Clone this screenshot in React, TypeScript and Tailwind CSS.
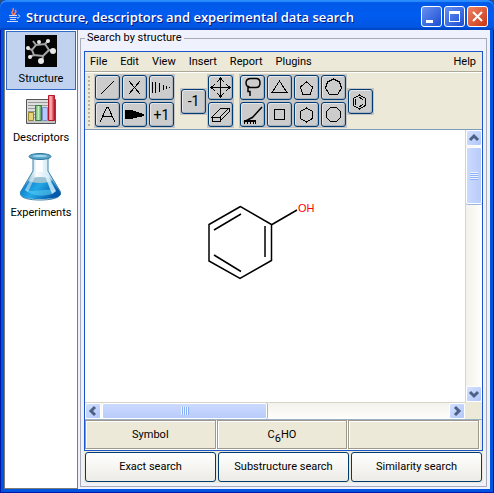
import React, { ReactNode } from "react";

type SvgProps = { children: ReactNode };

function ToolIcon({ children }: SvgProps) {
  return (
    <svg width="21" height="21" viewBox="0 0 21 21" fill="none" stroke="#000" strokeWidth="1" shapeRendering="crispEdges" aria-hidden="true">
      {children}
    </svg>
  );
}

function ToolButton({ label, children }: { label: string; children: ReactNode }) {
  return (
    <button
      type="button"
      aria-label={label}
      className="flex h-[25px] w-[25px] items-center justify-center rounded-[3px] border border-[#003c74] bg-[#cccccc] text-sm leading-4 shadow-[inset_1px_1px_0_#e4e6ea,inset_-1px_-1px_0_#a9b3bd]"
    >
      {children}
    </button>
  );
}

const BondIcon = () => <ToolIcon><path d="M4 17 17 4" /></ToolIcon>;
const CrossIcon = () => <ToolIcon><path d="M5 4 16 17M16 4 5 17" /></ToolIcon>;
const HashIcon = () => (
  <ToolIcon>
    <path d="M1.5 5v11M4.5 5v11M8.5 6v9M12.5 8v5M15.5 9v3M18.5 10v1" />
  </ToolIcon>
);
const LetterIcon = () => <ToolIcon><path d="M3 18 10 3h1l7 15M6 12h10" /></ToolIcon>;
const WedgeIcon = () => <ToolIcon><path d="M1 6h6l13 4v2L7 15H1z" fill="#000" stroke="none" /></ToolIcon>;
const MoveIcon = () => (
  <ToolIcon>
    <path d="M10.5 1v19M1 10.5h19M7 5l3.5-4L14 5M7 16l3.5 4 3.5-4M5 7l-4 3.5L5 14M16 7l4 3.5-4 3.5" />
  </ToolIcon>
);
const EraserIcon = () => <ToolIcon><path d="M2 13 11 4h8l-9 9zM2 13v4h8v-4M10 17l9-9V4" /></ToolIcon>;
const LassoIcon = () => (
  <ToolIcon>
    <path d="M8 10.500c-2 0-4-2-4-4.500 0-3 2-4.500 5-4.500h5c3 0 4 2 4 4.500s-1 4.500-4 4.500zM8 10.500 6 9M8 10.500H6v4h2v4.500" strokeWidth="1.500" shapeRendering="auto" />
  </ToolIcon>
);
const BroomIcon = () => (
  <ToolIcon>
    <path d="M20 3 10 14M2 18l9-5" strokeWidth="1.500" shapeRendering="auto" />
    <path d="M2 17h12v1H2zM2 18h1v2H2zM5 18h1v2H5zM8 18h1v2H8zM11 18h1v2h-1zM13 18h1v2h-1z" fill="#000" stroke="none" />
    <path d="M2 16.500h12" />
  </ToolIcon>
);
const TriangleIcon = () => <ToolIcon><path d="M10.500 4 18 15.500H3z" /></ToolIcon>;
const PentagonIcon = () => <ToolIcon><path d="m10.500 5 6 5-2 7h-8l-2-7z" /></ToolIcon>;
const HeptagonIcon = () => <ToolIcon><path d="m10.500 2 6 3 2 6-4 6.500h-8L2.500 11l2-6z" /></ToolIcon>;
const SquareIcon = () => <ToolIcon><path d="M5.500 5.500h10v10h-10z" /></ToolIcon>;
const HexagonIcon = () => <ToolIcon><path d="m10.500 4 6 3.500v7l-6 3.500-6-3.500v-7z" /></ToolIcon>;
const OctagonIcon = () => <ToolIcon><path d="M7.500 3.500h6l4 4v6l-4 4h-6l-4-4v-6z" /></ToolIcon>;
const BenzeneIcon = () => (
  <ToolIcon>
    <path d="m9.500 4 6 3.500v7l-6 3.500-6-3.500v-7zM5.500 8v6M9 6l4 2.500M9 16l4-2.500" />
  </ToolIcon>
);

function JavaIcon() {
  return (
    <svg width="16" height="16" viewBox="0 0 16 16" fill="none" aria-hidden="true">
      <path d="M8 8C3 5 9 4 7 1M9 8c-2-3 3-2 0-5" stroke="#ff805c" strokeWidth="1.500" />
      <path d="M3 8.500h8M3.500 10.500h7M4 12.500h6M1 14.500h11M12 8c3 0 2 3-1 3" stroke="#d1d9ff" />
    </svg>
  );
}

function MoleculeIcon() {
  return (
    <svg width="32" height="32" viewBox="0 0 32 32" aria-hidden="true">
      <path fill="#050505" d="M0 0h32v32H0z" />
      <path d="m11 10 9-1 4 6-6 6-9-1-2-5zM11 10 8 6M20 9l3-3M24 15l5 1M18 21l-1 6M9 20l-5 2M7 15l-5-2" fill="none" stroke="#a5a5a5" strokeWidth="2" />
      <g fill="#e8e8e8">
        <circle cx="14" cy="7" r="2" /><circle cx="23" cy="6" r="2" /><circle cx="28" cy="16" r="3" />
        <circle cx="16" cy="26" r="3" /><circle cx="5" cy="22" r="2" /><circle cx="3" cy="13" r="2" />
      </g>
    </svg>
  );
}

function ChartIcon() {
  return (
    <svg width="32" height="32" viewBox="0 0 32 32" aria-hidden="true">
      <defs>
        <linearGradient id="red" x2="1"><stop stopColor="#f86a75" /><stop offset=".4" stopColor="#ffb5bb" /><stop offset="1" stopColor="#c90b19" /></linearGradient>
        <linearGradient id="green" x2="1"><stop stopColor="#5aa45e" /><stop offset=".5" stopColor="#c4efbf" /><stop offset="1" stopColor="#3b8545" /></linearGradient>
      </defs>
      <path d="M1.500 5.500h29v24h-29z" fill="#dedede" stroke="#555" />
      <path d="M3 8.500h26M3 11.500h26M3 14.500h26M3 17.500h26M3 20.500h26M3 23.500h26" stroke="#999" />
      <path d="M3.500 18.500h5v8h-5z" fill="#e6d578" stroke="#938336" />
      <path d="M10.500 11.500h6v15h-6z" fill="url(#green)" stroke="#3a7d42" />
      <path d="M17.500 13.500h5v13h-5z" fill="#b6c9ff" stroke="#7992c8" />
      <path d="M23.500 1.500h6v25h-6z" fill="url(#red)" stroke="#b61925" />
      <path d="M2 28h28" stroke="#aaa" />
    </svg>
  );
}

function FlaskIcon() {
  return (
    <svg width="48" height="48" viewBox="0 0 48 48" aria-hidden="true">
      <defs>
        <linearGradient id="glass" x2="1"><stop stopColor="#4085ab" /><stop offset=".4" stopColor="#f8fcfe" /><stop offset=".7" stopColor="#d4ebf5" /><stop offset="1" stopColor="#367ba4" /></linearGradient>
        <linearGradient id="liquid" x2="1" y2=".4"><stop stopColor="#0868ba" /><stop offset=".5" stopColor="#22a9e8" /><stop offset="1" stopColor="#0759a9" /></linearGradient>
      </defs>
      <path d="M16 3v15L4 38c-3 6 5 9 19 9s23-3 20-9L31 18V3z" fill="url(#glass)" stroke="#3a84aa" />
      <path d="M12 27h23l8 12c3 5-6 7-20 7S1 44 4 38z" fill="url(#liquid)" />
      <ellipse cx="23" cy="27" rx="12" ry="3" fill="#9bc2d2" />
      <path d="M7 36c9 5 22-2 32 2-5 6-24 7-32-2z" fill="#57c9f2" opacity=".6" />
      <path d="M30 21 39 38l-4 3-7-18z" fill="#d9f4ff" opacity=".8" />
      <path d="m14 25-6 12 3 2 7-15z" fill="#e8faff" opacity=".5" />
      <path d="M19 7h7v12h-7z" fill="#fff" opacity=".8" />
      <ellipse cx="23" cy="3.500" rx="11" ry="3" fill="#5da6cb" stroke="#2c759c" />
      <ellipse cx="23" cy="3" rx="7" ry="1" fill="#a7d9ed" />
    </svg>
  );
}

const winButton = "flex h-[21px] w-[21px] items-center justify-center rounded-[3px] border border-white";

function TitleBar() {
  return (
    <header className="flex h-[30px] shrink-0 items-center rounded-t-md bg-linear-to-b from-[#0058e6] via-[#005cf0] to-[#0054e0] pr-[6px] pl-[6px] shadow-[inset_0_2px_1px_#2b8cff,inset_0_-2px_1px_#0048c8]">
      <JavaIcon />
      <h1 className="ml-1 flex-1 pt-1 font-['Open_Sans',sans-serif] text-[13px] leading-5 font-semibold whitespace-nowrap text-white [text-shadow:1px_1px_0_#0a1883]">
        Structure, descriptors and experimental data search
      </h1>
      <div className="flex gap-[2px] pt-[3px]">
        <button type="button" aria-label="Minimize" className={winButton + " bg-linear-to-br from-[#6790f1] to-[#1c4cd4]"}>
          <svg width="19" height="19"><path d="M4 13h7v3H4z" fill="#fff" /></svg>
        </button>
        <button type="button" aria-label="Maximize" className={winButton + " bg-linear-to-br from-[#6790f1] to-[#1c4cd4]"}>
          <svg width="19" height="19"><path d="M4 4h11v11H4zM5 7v7h9V7z" fill="#fff" fillRule="evenodd" /></svg>
        </button>
        <button type="button" aria-label="Close" className={winButton + " bg-linear-to-br from-[#ee8162] to-[#c93208]"}>
          <svg width="19" height="19"><path d="m5 5 9 9m0-9-9 9" stroke="#fff" strokeWidth="2" /></svg>
        </button>
      </div>
    </header>
  );
}

function Sidebar() {
  const item = "flex flex-col items-center border";
  return (
    <nav className="flex w-[74px] shrink-0 flex-col border-r border-b border-l border-[#7c7c75] bg-white p-px leading-4">
      <button type="button" aria-current="page" className={item + " h-[59px] gap-1 border-[#316ac5] bg-[#c1d2ee] pt-[3px]"}>
        <MoleculeIcon />
        Structure
      </button>
      <button type="button" className={item + " h-[59px] gap-1 border-transparent pt-[3px]"}>
        <ChartIcon />
        Descriptors
      </button>
      <button type="button" className={item + " gap-1 border-transparent pt-[3px]"}>
        <FlaskIcon />
        Experiments
      </button>
    </nav>
  );
}

function MenuBar() {
  return (
    <nav className="flex h-5 shrink-0 items-center gap-[13px] border-b border-[#aca899] px-[5px] leading-4">
      {["File", "Edit", "View", "Insert", "Report", "Plugins"].map((name) => (
        <button key={name} type="button">{name}</button>
      ))}
      <button type="button" className="ml-auto pr-px">Help</button>
    </nav>
  );
}

function Toolbar() {
  const group = "grid gap-[2px] bg-[#c5c5c5] p-px";
  return (
    <div role="toolbar" aria-label="Drawing tools" className="flex h-[58px] shrink-0 items-center border-t border-b border-t-white border-b-[#7f9db9] pl-[3px]">
      <div className="mr-1 h-[50px] w-[2px] bg-[repeating-linear-gradient(to_bottom,#b5b2a5_0px,#b5b2a5_2px,transparent_2px,transparent_4px)]" />
      <div className={group + " grid-cols-3"}>
        <ToolButton label="Single bond"><BondIcon /></ToolButton>
        <ToolButton label="Delete bond"><CrossIcon /></ToolButton>
        <ToolButton label="Stereo bond down"><HashIcon /></ToolButton>
        <ToolButton label="Atom"><LetterIcon /></ToolButton>
        <ToolButton label="Stereo bond up"><WedgeIcon /></ToolButton>
        <ToolButton label="Increase charge">+1</ToolButton>
      </div>
      <div className={group + " ml-[5px]"}>
        <ToolButton label="Decrease charge">-1</ToolButton>
      </div>
      <div className={group}>
        <ToolButton label="Move"><MoveIcon /></ToolButton>
        <ToolButton label="Eraser"><EraserIcon /></ToolButton>
      </div>
      <div className={group + " ml-[5px] grid-cols-4"}>
        <ToolButton label="Lasso select"><LassoIcon /></ToolButton>
        <ToolButton label="Triangle"><TriangleIcon /></ToolButton>
        <ToolButton label="Pentagon"><PentagonIcon /></ToolButton>
        <ToolButton label="Heptagon"><HeptagonIcon /></ToolButton>
        <ToolButton label="Clean up"><BroomIcon /></ToolButton>
        <ToolButton label="Square"><SquareIcon /></ToolButton>
        <ToolButton label="Hexagon"><HexagonIcon /></ToolButton>
        <ToolButton label="Octagon"><OctagonIcon /></ToolButton>
      </div>
      <div className={group}>
        <ToolButton label="Benzene"><BenzeneIcon /></ToolButton>
      </div>
    </div>
  );
}

function ScrollButton({ label, d }: { label: string; d: string }) {
  return (
    <button type="button" aria-label={label} className="flex h-4 w-4 shrink-0 items-center justify-center rounded-[2px] border border-white bg-linear-to-br from-[#d3e0ff] to-[#b2c7fa]">
      <svg width="12" height="12" fill="none" stroke="#4d6185" strokeWidth="3"><path d={d} /></svg>
    </button>
  );
}

function Canvas() {
  return (
    <div className="grid min-h-0 flex-1 grid-cols-[1fr_17px] grid-rows-[1fr_17px] border-b border-[#9bb0c4]">
      <svg className="h-full w-full bg-white" role="img" aria-label="Phenol structure">
        <g fill="none" stroke="#000" strokeWidth="1.500">
          <path d="m155.500 76.500-31.500 18v36.500l31 17.500 31.500-18V94.500zM187 94.500 212 80" />
          <path d="m156 84-27 16M129 125l27 16.500M180 96v31" />
        </g>
        <text x="213" y="82" fill="#f00" className="font-['Liberation_Sans',sans-serif] text-[11px]">OH</text>
      </svg>
      <div className="flex flex-col border-l border-[#d8d5c8] bg-linear-to-r from-[#f3f2ec] to-[#fefefb]">
        <ScrollButton label="Scroll up" d="m2 8 4-4 4 4" />
        <div className="mt-px flex h-[57px] w-4 items-center justify-center rounded-[2px] border border-white bg-linear-to-r from-[#cbdafe] to-[#b9cbfb] shadow-[0_1px_0_#9db5df]">
          <div className="h-2 w-2 bg-[repeating-linear-gradient(to_bottom,#eef4fe_0px,#eef4fe_1px,#8cb0f8_1px,#8cb0f8_2px)]" />
        </div>
        <div className="flex-1" />
        <ScrollButton label="Scroll down" d="m2 4 4 4 4-4" />
      </div>
      <div className="flex border-t border-[#d8d5c8] bg-linear-to-b from-[#f3f2ec] to-[#fefefb]">
        <ScrollButton label="Scroll left" d="M8 2 4 6l4 4" />
        <div className="mx-px flex h-4 w-[165px] items-center justify-center rounded-[2px] border border-white bg-linear-to-b from-[#cbdafe] to-[#b9cbfb] shadow-[1px_0_0_#9db5df]">
          <div className="h-2 w-2 bg-[repeating-linear-gradient(to_right,#eef4fe_0px,#eef4fe_1px,#8cb0f8_1px,#8cb0f8_2px)]" />
        </div>
        <div className="flex-1" />
        <ScrollButton label="Scroll right" d="m4 2 4 4-4 4" />
      </div>
    </div>
  );
}

function StatusBar() {
  const cell = "flex items-center justify-center border border-[#9d9a8d] shadow-[inset_1px_1px_0_#fff,1px_1px_0_#fff]";
  return (
    <div className="grid h-[30px] shrink-0 grid-cols-3 gap-px pr-[3px] pb-px leading-4">
      <div className={cell}>Symbol</div>
      <div className={cell}><span>C<sub className="-bottom-1 text-[11px]">6</sub>HO</span></div>
      <div className={cell} />
    </div>
  );
}

export default function App() {
  return (
    <div className="h-screen bg-[#315079]">
      <main className="flex h-full flex-col overflow-hidden rounded-t-md bg-[#0054e0] font-['Roboto',sans-serif] text-[11px] text-black shadow-[inset_1px_-1px_0_#0019a8,inset_-1px_0_0_#0019a8]">
        <TitleBar />
        <div className="mx-1 mb-1 flex min-h-0 flex-1 bg-[#eff2fd]">
          <Sidebar />
          <fieldset className="mr-[3px] mb-[2px] ml-[2px] flex min-w-0 flex-1 flex-col border border-[#a9acb8] px-[3px] pb-[3px]">
            <legend className="ml-px px-[2px] leading-4">Search by structure</legend>
            <div className="flex h-full flex-col">
              <section className="mt-[5px] flex min-h-0 flex-1 flex-col border border-[#1b55cb] bg-[#ece9d8]">
                <MenuBar />
                <Toolbar />
                <Canvas />
                <StatusBar />
              </section>
              <div className="grid grid-cols-3 gap-[2px] bg-[#ece9d8] p-px leading-4">
                {["Exact search", "Substructure search", "Similarity search"].map((name) => (
                  <button key={name} type="button" className="h-[30px] rounded-[3px] border border-[#003c74] bg-linear-to-b from-white to-[#ecebe5]">
                    {name}
                  </button>
                ))}
              </div>
            </div>
          </fieldset>
        </div>
      </main>
    </div>
  );
}
